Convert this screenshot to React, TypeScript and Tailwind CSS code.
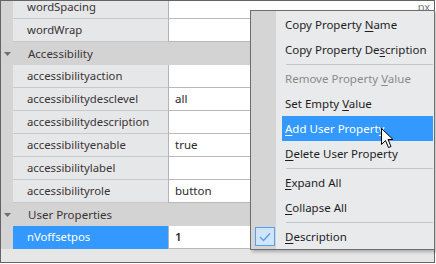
import React from "react";

type Row =
  | { kind: "cat"; label: string }
  | { kind: "prop"; name: string; value?: string; selected?: boolean; unit?: string };

const rows: Row[] = [
  { kind: "prop", name: "wordSpacing", unit: "px" },
  { kind: "prop", name: "wordWrap" },
  { kind: "cat", label: "Accessibility" },
  { kind: "prop", name: "accessibilityaction" },
  { kind: "prop", name: "accessibilitydesclevel", value: "all" },
  { kind: "prop", name: "accessibilitydescription" },
  { kind: "prop", name: "accessibilityenable", value: "true" },
  { kind: "prop", name: "accessibilitylabel" },
  { kind: "prop", name: "accessibilityrole", value: "button" },
  { kind: "cat", label: "User Properties" },
  { kind: "prop", name: "nVoffsetpos", value: "1", selected: true },
];

type MenuItem =
  | { sep: true }
  | { sep?: false; pre: string; key: string; post: string; disabled?: boolean; hot?: boolean };

const menu: MenuItem[] = [
  { pre: "Copy Property ", key: "N", post: "ame" },
  { pre: "Copy Property De", key: "s", post: "cription" },
  { sep: true },
  { pre: "Remove Property ", key: "V", post: "alue", disabled: true },
  { pre: "Set Empty ", key: "V", post: "alue" },
  { pre: "", key: "A", post: "dd User Property", hot: true },
  { pre: "", key: "D", post: "elete User Property" },
  { sep: true },
  { pre: "", key: "E", post: "xpand All" },
  { pre: "", key: "C", post: "ollapse All" },
  { sep: true },
  { pre: "", key: "D", post: "escription" },
];

const GridRow = ({ row }: { row: Row }) => {
  if (row.kind === "cat") {
    return (
      <div className="flex h-[23px] items-center bg-[#d3d3d3]">
        <div className="flex w-[12px] justify-center">
          <svg width="7" height="4" viewBox="0 0 7 4">
            <path d="M0 0h7L3.5 4z" fill="#6e6e6e" />
          </svg>
        </div>
        <span className="pl-[15px] text-[11.5px] text-[#3a3434]">{row.label}</span>
      </div>
    );
  }
  return (
    <div className="flex h-[23px]">
      <div className="w-[12px] bg-[#d4d4d4]" />
      <div
        className={`flex w-[155px] items-center border-b pl-[14px] text-[11.3px] ${
          row.selected
            ? "border-[#3399ff] bg-[#3399ff] text-white"
            : "border-[#c9c9c9] bg-[#e6e7e8] text-[#3a3434]"
        }`}
      >
        {row.name}
      </div>
      <div className="w-[1px] bg-[#b4b4b4]" />
      <div className="flex flex-1 items-center justify-between border-b border-[#b9b9b9] bg-white pl-[6px] pr-[4px] text-[11.5px] text-[#2a2a2a]">
        <span className={row.selected ? "font-semibold" : ""}>{row.value}</span>
        {row.unit && <span className="text-[11px] text-[#7a7a7a]">{row.unit}</span>}
      </div>
    </div>
  );
};

export default function App() {
  return (
    <div className="relative h-[264px] w-[436px] overflow-hidden bg-white font-['Noto_Sans',sans-serif]">
      <div className="h-[263px] w-[435px] overflow-hidden border border-[#646464] bg-[#e6e6e6]">
        <div className="-mt-[5px]">
          {rows.map((r, i) => (
            <GridRow key={i} row={r} />
          ))}
        </div>
      </div>

      {/* context menu */}
      <div className="absolute left-[250px] top-[10px] flex h-[240px] w-[185px] border border-[#6e6e6e] bg-[#e9eaeb] shadow-[2px_2px_3px_rgba(0,0,0,0.25)]">
        <div className="flex w-[25px] flex-col justify-end bg-[#d5d5d5] pb-[3px] pl-[4px]">
          <div className="flex h-[19px] w-[20px] items-center justify-center border border-[#5aa0e6] bg-[#cfe5fa]">
            <svg width="12" height="10" viewBox="0 0 12 10">
              <path d="M1 5l3.5 3.5L11 1.5" fill="none" stroke="#5aa0e6" strokeWidth="1.4" />
            </svg>
          </div>
        </div>
        <div className="flex flex-1 flex-col pt-[1px] text-[11.5px]">
          {menu.map((m, i) =>
            m.sep ? (
              <div key={i} className="flex h-[4px] items-center pl-[10px] pr-[1px]">
                <div className="h-[1px] w-full bg-[#c4c4c4]" />
              </div>
            ) : (
              <div key={i} className="flex h-[25px] pl-[6px] pr-[1px]">
                <div
                  className={`flex flex-1 items-center pl-[3px] ${
                    m.hot ? "bg-[#3399ff] text-white" : m.disabled ? "text-[#8a8a8a]" : "text-[#1e1e1e]"
                  }`}
                >
                  <span className="whitespace-pre">
                    {m.pre}
                    <span className="underline underline-offset-2">{m.key}</span>
                    {m.post}
                  </span>
                </div>
              </div>
            )
          )}
        </div>
      </div>

      {/* mouse pointer */}
      <svg className="absolute left-[381px] top-[128px]" width="13" height="21" viewBox="0 0 13 21">
        <path
          d="M0.5 0.5V16.5L4.5 12.5L7.5 19.5L10 18.5L7 11.5H12Z"
          fill="white"
          stroke="black"
          strokeWidth="1"
          strokeLinejoin="round"
        />
      </svg>
    </div>
  );
}
